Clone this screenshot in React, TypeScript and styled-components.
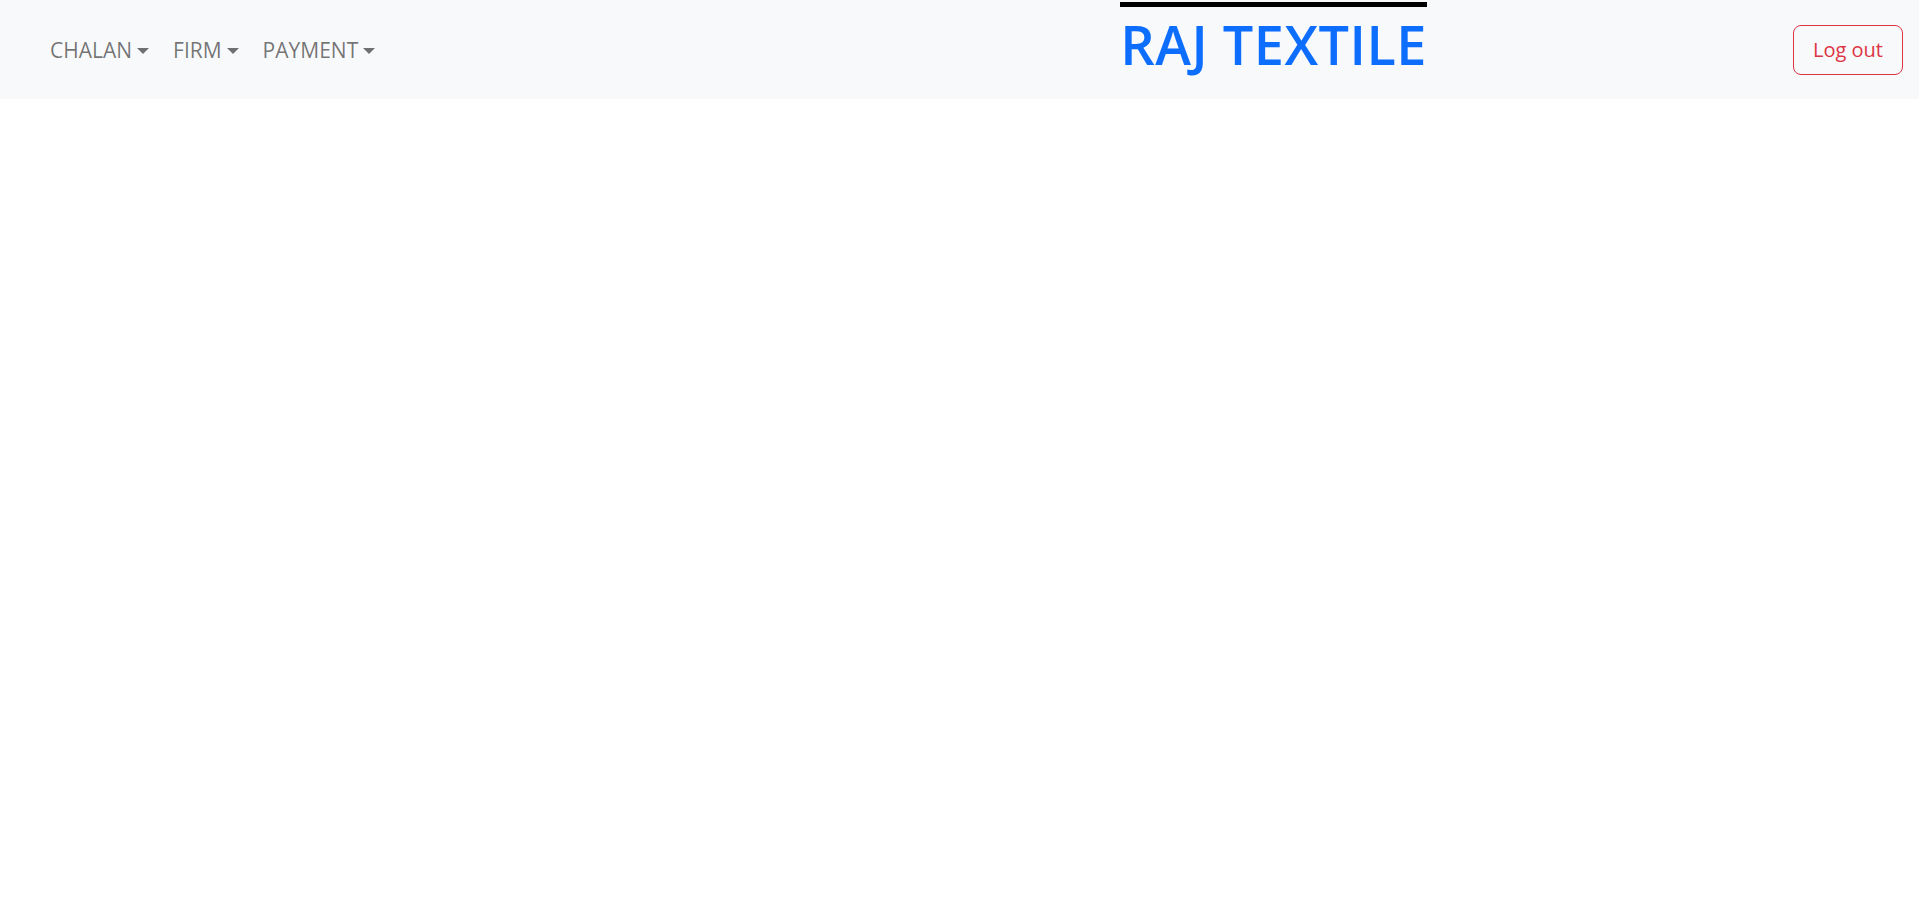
import styled, { createGlobalStyle } from 'styled-components';

const GlobalStyle = createGlobalStyle`
    body {
        margin: 0;
        background: #ffffff;
        font-family: 'Open Sans', 'Noto Sans', sans-serif;
    }
`;

const Navbar = styled.nav`
    height: 99px;
    background: #f8f9fa;
    display: flex;
    align-items: center;
    padding: 0 16px 0 50px;
    box-sizing: border-box;
`;

const Menu = styled.ul`
    display: flex;
    align-items: center;
    gap: 24px;
    list-style: none;
    margin: 0;
    padding: 0;
`;

const MenuItem = styled.li`
    display: flex;
    align-items: center;
    font-size: 21px;
    color: rgba(0, 0, 0, 0.55);
    cursor: pointer;

    &::after {
        content: '';
        display: inline-block;
        margin-left: 5px;
        border-top: 6px solid currentColor;
        border-left: 6px solid transparent;
        border-right: 6px solid transparent;
        margin-top: 2px;
    }
`;

const Brand = styled.h1`
    margin: 2px 366px 0 auto;
    padding-top: 5px;
    align-self: flex-start;
    border-top: 5px solid #000000;
    font-size: 54px;
    font-weight: 600;
    letter-spacing: 0.5px;
    line-height: 1.2;
    color: #0d6efd;
    white-space: nowrap;
`;

const LogoutButton = styled.button`
    font-family: inherit;
    font-size: 20px;
    color: #dc3545;
    background: transparent;
    border: 1px solid #dc3545;
    border-radius: 8px;
    width: 110px;
    height: 50px;
    padding: 0;
    cursor: pointer;
`;

const menus = ['CHALAN', 'FIRM', 'PAYMENT'];

const App = () => {
    return (
        <>
            <GlobalStyle />
            <Navbar>
                <Menu>
                    {menus.map((m) => (
                        <MenuItem key={m}>{m}</MenuItem>
                    ))}
                </Menu>
                <Brand>RAJ TEXTILE</Brand>
                <LogoutButton>Log out</LogoutButton>
            </Navbar>
        </>
    );
};

export default App;
